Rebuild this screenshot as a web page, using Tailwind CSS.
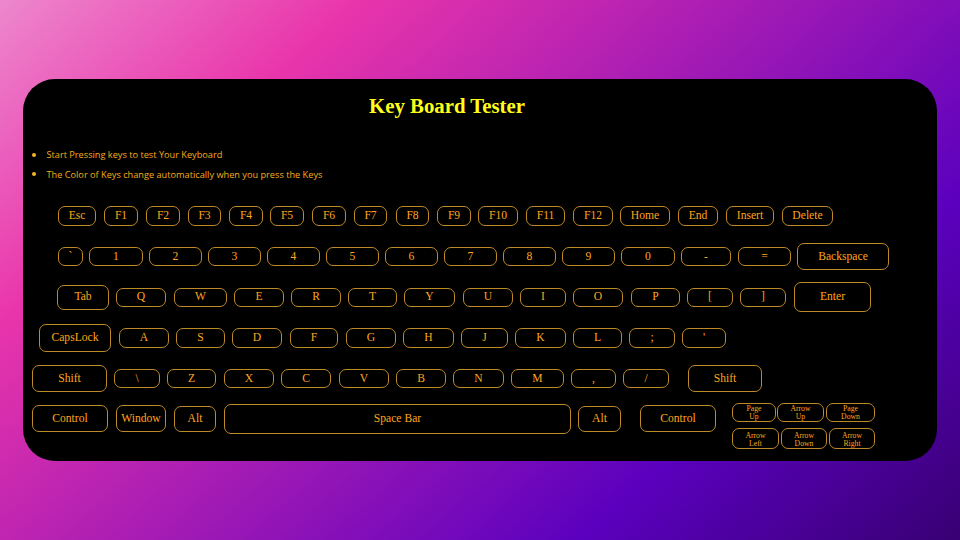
<!DOCTYPE html>
<html lang="en">
<head>
<meta charset="utf-8">
<title>Key Board Tester</title>
<script src="https://cdn.jsdelivr.net/npm/@tailwindcss/browser@4"></script>
</head>
<body class="h-[540px] w-[960px] overflow-hidden bg-[linear-gradient(138deg,#ed87cd_0%,#e935ab_23%,#5b00be_75.6%,#380073_100%)] pt-[79px] pl-[23px]">
<main class="flex h-[382px] w-[914px] flex-col rounded-[32px] bg-black font-['Liberation_Serif',serif] text-[11.6px] text-[#ffa51f]">
  <h1 class="mt-[14px] h-[25px] pr-[66px] text-center text-[20.8px] leading-[25px] font-bold text-[#ffff1a]">Key Board Tester</h1>
  <ul class="mt-[27px] flex h-[39px] flex-col pl-[9px] font-['Open_Sans','Noto_Sans',sans-serif] text-[9.2px] leading-[19.5px] text-[#f5ad1c]">
    <li class="flex items-center"><span class="mr-[10.5px] size-1 rounded-full bg-[#f5b526]"></span><span>Start Pressing keys to test Your Keyboard</span></li>
    <li class="flex items-center"><span class="mr-[10.5px] size-1 rounded-full bg-[#f5b526]"></span><span>The Color of Keys change automatically when you press the Keys</span></li>
  </ul>
  <div id="keyboard" class="mt-[22px] flex flex-col"></div>
</main>
<script>
// Each row: top, bottom, default key top and bottom, label padding, then keys as [label, left, right, top?, bottom?]
const rows = [
  [206, 226, 206, 226, 'pb-0', [['Esc',58,96],['F1',104,138],['F2',146,180],['F3',188,221],['F4',229,263],['F5',270,304],['F6',312,346],['F7',354,387],['F8',396,429],['F9',437,471],['F10',478,518],['F11',526,565],['F12',573,613],['Home',620,670],['End',678,718],['Insert',726,774],['Delete',782,833]]],
  [243, 270, 247, 266, 'pb-0', [['`',58,83],['1',89,143],['2',149,202],['3',208,261],['4',267,320],['5',326,379],['6',385,438],['7',444,497],['8',503,556],['9',562,615],['0',621,675],['-',681,731],['=',738,791],['Backspace',797,889,243,270]]],
  [282, 312, 288, 307, 'pb-px', [['Tab',57,109,285,310],['Q',116,166],['W',174,227],['E',234,284],['R',291,341],['T',348,397],['Y',404,455],['U',463,513],['I',520,566],['O',573,623],['P',631,680],['[',687,733],[']',740,786],['Enter',794,871,282,312]]],
  [324, 352, 328, 348, 'pb-0', [['CapsLock',39,111,324,352],['A',119,169],['S',176,225],['D',232,282],['F',290,338],['G',346,396],['H',403,454],['J',461,508],['K',515,566],['L',573,622],[';',629,675],["'",682,726]]],
  [365, 392, 369, 388, 'pb-0', [['Shift',32,107,365,392],['\\',114,160],['Z',167,216],['X',224,274],['C',281,331],['V',339,389],['B',396,446],['N',453,504],['M',511,564],[',',571,616],['/',623,669],['Shift',688,762,365,392]]],
  [403, 449, 405, 432, 'pb-0', [['Control',32,108],['Window',116,166],['Alt',174,216,406,432],['Space Bar',224,571,404,434],['Alt',578,621,406,432],['Control',640,716]]]
];
const small = [
  [[['Page','Up'],732,776],[['Arrow','Up'],777,824],[['Page','Down'],826,875]],
  [[['Arrow','Left'],732,779],[['Arrow','Down'],781,827],[['Arrow','Right'],829,875]]
];
const board = document.getElementById('keyboard');
let bottom = 206;
let last;
for (const [top, end, kt, kb, pad, keys] of rows) {
  const row = document.createElement('div');
  row.className = 'flex items-start';
  row.style.marginTop = (top - bottom) + 'px';
  row.style.height = (end - top) + 'px';
  let x = 23;
  for (const [label, l, r, t = kt, b = kb] of keys) {
    const key = document.createElement('div');
    key.className = 'flex shrink-0 items-center justify-center rounded-[7px] border border-[#bd8a26] whitespace-nowrap';
    key.classList.add(pad);
    key.style.cssText = `margin-left:${l - x}px;margin-top:${t - top}px;width:${r - l}px;height:${b - t}px`;
    key.textContent = label;
    row.append(key);
    x = r;
  }
  board.append(row);
  bottom = end;
  last = row;
}
const cluster = document.createElement('div');
cluster.className = 'ml-4 flex flex-col gap-[6px] text-[7.7px] leading-[8px]';
small.forEach((keys, i) => {
  const line = document.createElement('div');
  line.className = 'flex';
  let x = 732;
  for (const [words, l, r] of keys) {
    const key = document.createElement('div');
    key.className = 'flex shrink-0 flex-col items-center justify-center rounded-[7px] border border-[#bd8a26]';
    key.classList.add(i ? 'pt-[2px]' : 'pt-px');
    key.style.cssText = `margin-left:${l - x}px;width:${r - l}px;height:${i ? 21 : 19}px`;
    for (const w of words) { const s = document.createElement('span'); s.textContent = w; key.append(s); }
    line.append(key);
    x = r;
  }
  cluster.append(line);
});
last.append(cluster);
</script>
</body>
</html>
